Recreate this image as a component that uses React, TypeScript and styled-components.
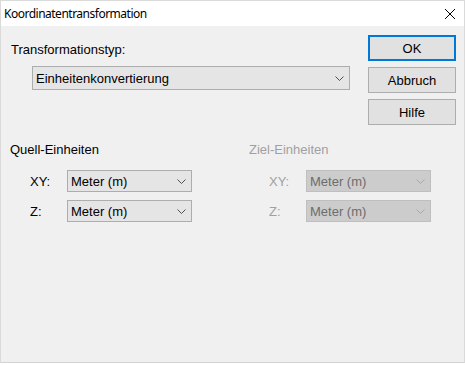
import styled, { createGlobalStyle } from 'styled-components';

const GlobalStyle = createGlobalStyle`
  html, body {
    margin: 0;
    padding: 0;
    background: #ffffff;
  }
  body {
    font-family: 'Liberation Sans', Arial, sans-serif;
    font-size: 13px;
    color: #000000;
  }
`;

const Window = styled.div`
  width: 465px;
  height: 363px;
  box-sizing: border-box;
  border: 1px solid #dadada;
  border-bottom-color: #d2d2d2;
  background: #f0f0f0;
  display: flex;
  flex-direction: column;
`;

const TitleBar = styled.div`
  height: 25px;
  background: #ffffff;
  display: flex;
  align-items: center;
  justify-content: space-between;
  padding: 0 9px 0 3px;
`;

const Title = styled.span`
  font-family: 'Noto Sans', 'Open Sans', sans-serif;
  font-size: 12px;
  letter-spacing: -0.5px;
  color: #000000;
  margin-top: -1px;
`;

const CloseIcon = styled.svg`
  width: 10px;
  height: 10px;
  display: block;
`;

const Body = styled.div`
  flex: 1;
  display: flex;
  padding: 9px 8px 0 9px;
`;

const Main = styled.div`
  flex: 1;
  min-width: 0;
  display: flex;
  flex-direction: column;
`;

const Label = styled.div<{ $disabled?: boolean }>`
  line-height: 15px;
  white-space: nowrap;
  color: ${({ $disabled }) => ($disabled ? '#a0a0a0' : '#000000')};
`;

const TypeLabel = styled(Label)`
  margin: 7px 0 0 1px;
`;

const Select = styled.div<{ $width: number; $height: number; $disabled?: boolean }>`
  width: ${({ $width }) => $width}px;
  height: ${({ $height }) => $height}px;
  flex-shrink: 0;
  box-sizing: border-box;
  border: 1px solid ${({ $disabled }) => ($disabled ? '#bfbfbf' : '#adadad')};
  background: ${({ $disabled }) => ($disabled ? '#cccccc' : '#e5e5e5')};
  color: ${({ $disabled }) => ($disabled ? '#6d6d6d' : '#000000')};
  display: flex;
  align-items: center;
  justify-content: space-between;
  padding: 0 4px 0 3px;
`;

const TypeSelect = styled(Select)`
  margin: 9px 0 0 22px;
`;

const Chevron = styled.svg<{ $disabled?: boolean }>`
  width: 9px;
  height: 5px;
  display: block;
  margin-right: 1px;
  stroke: ${({ $disabled }) => ($disabled ? '#a8a8a8' : '#505050')};
`;

const Groups = styled.div`
  display: flex;
  margin-top: 52px;
`;

const Group = styled.div`
  flex: 0 0 239px;
  display: flex;
  flex-direction: column;

  &:last-child {
    flex: 1 1 auto;
  }
`;

const Rows = styled.div`
  display: flex;
  flex-direction: column;
  gap: 8px;
  margin-top: 13px;
  padding-left: 20px;
`;

const Row = styled.div`
  display: flex;
  align-items: center;
`;

const RowLabel = styled(Label)`
  width: 37px;
`;

const Buttons = styled.div`
  flex: 0 0 88px;
  display: flex;
  flex-direction: column;
  gap: 6px;
`;

const Button = styled.button<{ $default?: boolean }>`
  width: 88px;
  height: 26px;
  box-sizing: border-box;
  margin: 0;
  padding: 0;
  font-family: 'Liberation Sans', Arial, sans-serif;
  font-size: 13px;
  color: #000000;
  background: #e1e1e1;
  border: ${({ $default }) => ($default ? '2px solid #0078d7' : '1px solid #adadad')};
  border-radius: 0;
`;

const ChevronIcon = ({ disabled }: { disabled?: boolean }) => (
  <Chevron $disabled={disabled} viewBox="0 0 9 5" fill="none" strokeWidth="1">
    <path d="M0.5 0.5 L4.5 4.5 L8.5 0.5" />
  </Chevron>
);

const UnitGroup = ({ title, disabled }: { title: string; disabled?: boolean }) => (
  <Group>
    <Label $disabled={disabled}>{title}</Label>
    <Rows>
      {['XY:', 'Z:'].map((axis) => (
        <Row key={axis}>
          <RowLabel $disabled={disabled}>{axis}</RowLabel>
          <Select $width={125} $height={22} $disabled={disabled}>
            <span>Meter (m)</span>
            <ChevronIcon disabled={disabled} />
          </Select>
        </Row>
      ))}
    </Rows>
  </Group>
);

export default function App() {
  return (
    <>
      <GlobalStyle />
      <Window>
        <TitleBar>
          <Title>Koordinatentransformation</Title>
          <CloseIcon viewBox="0 0 10 10" fill="none" stroke="#000" strokeWidth="1">
            <path d="M0 0 L10 10 M10 0 L0 10" />
          </CloseIcon>
        </TitleBar>
        <Body>
          <Main>
            <TypeLabel>Transformationstyp:</TypeLabel>
            <TypeSelect $width={318} $height={24}>
              <span>Einheitenkonvertierung</span>
              <ChevronIcon />
            </TypeSelect>
            <Groups>
              <UnitGroup title="Quell-Einheiten" />
              <UnitGroup title="Ziel-Einheiten" disabled />
            </Groups>
          </Main>
          <Buttons>
            <Button $default>OK</Button>
            <Button>Abbruch</Button>
            <Button>Hilfe</Button>
          </Buttons>
        </Body>
      </Window>
    </>
  );
}
